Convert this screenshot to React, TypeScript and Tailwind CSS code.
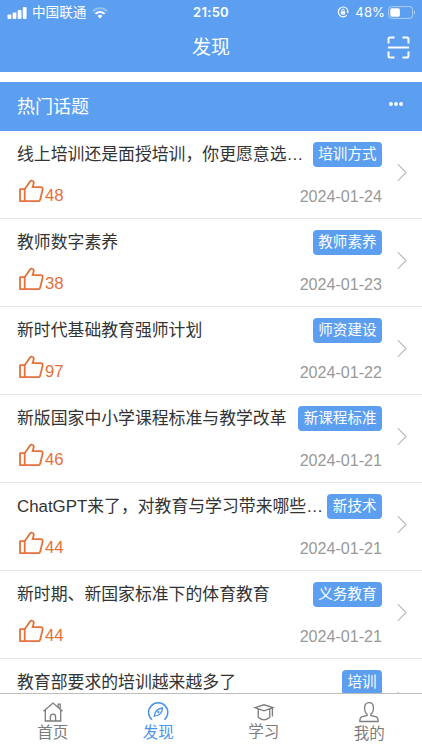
import React from 'react';

type Topic = { title: string; tag: string; likes: number; date: string };

const topics: Topic[] = [
  { title: '线上培训还是面授培训，你更愿意选…', tag: '培训方式', likes: 48, date: '2024-01-24' },
  { title: '教师数字素养', tag: '教师素养', likes: 38, date: '2024-01-23' },
  { title: '新时代基础教育强师计划', tag: '师资建设', likes: 97, date: '2024-01-22' },
  { title: '新版国家中小学课程标准与教学改革', tag: '新课程标准', likes: 46, date: '2024-01-21' },
  { title: 'ChatGPT来了，对教育与学习带来哪些…', tag: '新技术', likes: 44, date: '2024-01-21' },
  { title: '新时期、新国家标准下的体育教育', tag: '义务教育', likes: 44, date: '2024-01-21' },
  { title: '教育部要求的培训越来越多了', tag: '培训', likes: 40, date: '2024-01-21' },
];

function StatusBar() {
  return (
    <div className="grid h-6 grid-cols-[1fr_auto_1fr] items-center">
      <div className="flex items-center pl-[7px]">
        <svg width="20" height="12" viewBox="0 0 20 12" fill="white">
          <rect x="0.5" y="7.5" width="3.8" height="4.5" rx="1" />
          <rect x="5.6" y="5.5" width="3.8" height="6.5" rx="1" />
          <rect x="10.7" y="3" width="3.8" height="9" rx="1" />
          <rect x="15.8" y="0" width="3.8" height="12" rx="1" />
        </svg>
        <span className="ml-[5px] mt-px text-[13.6px] leading-6">中国联通</span>
        <svg className="ml-[6px]" width="16" height="12" viewBox="0 0 16 12" fill="none">
          <path d="M1 4.2a10 10 0 0 1 14 0" stroke="white" strokeOpacity=".35" strokeWidth="2" />
          <path d="M3.4 6.9a6.6 6.6 0 0 1 9.2 0" stroke="white" strokeWidth="2" />
          <path d="M5.5 9a3.6 3.6 0 0 1 5 0L8 11.6z" fill="white" />
        </svg>
      </div>
      <span className="mt-px font-[Inter] text-[13px] font-semibold tracking-[0.3px]">21:50</span>
      <div className="flex items-center justify-end pr-[6px]">
        <svg width="12" height="12" viewBox="0 0 12 12" fill="none" stroke="white">
          <path d="M9.8 2.6A4.9 4.9 0 1 0 9.9 9.2M9.8 2.6Q11 4 10.9 5.8" strokeWidth="1.1" />
          <path d="M9.3 5.5h2.7l-1.3 2z" fill="white" stroke="none" />
          <rect x="3.8" y="5.2" width="4.2" height="3.4" rx=".4" fill="white" stroke="none" />
          <path d="M4.7 5.4V4.4a1.2 1.2 0 0 1 2.4 0v1" strokeWidth=".9" />
        </svg>
        <span className="ml-[6px] mt-px font-[Inter] text-[13.2px]">48%</span>
        <svg className="ml-[3px]" width="28" height="13" viewBox="0 0 28 13" fill="none">
          <rect x=".6" y=".6" width="24" height="11.8" rx="3" stroke="white" strokeOpacity=".5" />
          <rect x="2.3" y="2.3" width="9.6" height="8.4" rx="1.6" fill="white" />
          <path d="M26 4.5c1.6.6 1.6 3.4 0 4z" fill="white" fillOpacity=".5" />
        </svg>
      </div>
    </div>
  );
}

function ThumbUp() {
  return (
    <svg className="mt-px" width="27" height="24" viewBox="0 0 27 24" fill="none" stroke="#e4703a" strokeWidth="1.8" strokeLinejoin="round">
      <path d="M3 11.2h4.7v12H3z" />
      <path d="M7.7 11.2 13 3.5c1-1.6 4-.9 3.8 1.4-.1 1.5-.9 2.8-1.4 4.3h8.3c1.6 0 2.3.9 1.9 2.4L23.300 21.300c-.3 1.300-1 1.900-2.200 1.900H7.700" />
    </svg>
  );
}

function TopicRow({ topic }: { topic: Topic }) {
  return (
    <li className="flex h-[88px] shrink-0 border-b border-[#e6e6e6] pl-[17px]">
      <div className="w-[365px] shrink-0">
        <div className="flex h-[47px] items-center justify-between">
          <span className="whitespace-nowrap text-[16.85px] leading-[26px] text-[#333]">{topic.title}</span>
          <span className="h-[25px] shrink-0 rounded-[4px] bg-[#5c9ff1] px-[5.5px] text-[14.55px] leading-[25px] text-white">{topic.tag}</span>
        </div>
        <div className="-mt-px flex justify-between">
          <div className="flex">
            <ThumbUp />
            <span className="ml-px mt-[7px] text-[16.8px] leading-6 text-[#e4703a]">{topic.likes}</span>
          </div>
          <span className="mt-[7px] text-[16.1px] leading-6 text-[#999]">{topic.date}</span>
        </div>
      </div>
      <svg className="ml-[15px] mt-[32px]" width="10" height="19" viewBox="0 0 10 19" fill="none" stroke="#b8b8b8" strokeWidth="1.1">
        <path d="M.8 1.2 9 9.5.8 17.8" />
      </svg>
    </li>
  );
}

const tabs = [
  {
    name: '首页',
    pad: 'pt-[7px]',
    label: 'leading-[20px]',
    icon: (
      <>
        <path d="M1.500 10.200 11 2l9.500 8.200M3.300 9v11h15.400V9M16.200 5.800V3.200h2v4.400" />
        <path d="M8.400 20v-4.200c0-3.600 5.200-3.600 5.200 0V20" />
      </>
    ),
  },
  {
    name: '发现',
    pad: 'pt-[7px]',
    label: 'leading-[20px]',
    icon: (
      <>
        <path d="M5 18.800a9.600 9.600 0 1 1 12.400 0" strokeWidth="1.5" />
        <path d="M15.600 7c-4.600.3-7.600 3-8.400 8.200 5-.4 7.900-3.200 8.400-8.200z" />
        <circle cx="11.400" cy="11.100" r=".5" />
      </>
    ),
  },
  {
    name: '学习',
    pad: 'pt-[6px]',
    label: 'leading-[20px]',
    icon: (
      <path d="M2 7.600 11 4.800l9 2.800-9 3.200zM5.200 9v8.300q2.600 2.500 5.800 2.500t5.800-2.500V9M19.400 7.800v8.700" />
    ),
  },
  {
    name: '我的',
    pad: 'pt-[8px]',
    label: 'leading-[20px]',
    icon: (
      <path d="M11 .7C8 .7 6.600 2.700 6.600 5.800c0 3 1 5.400 2.500 6.400v1.200l-5.300 1.400c-1.700.5-2 1.600-2 4.700h18.400c0-3.100-.3-4.200-2-4.700l-5.300-1.400v-1.200c1.500-1 2.500-3.400 2.500-6.400C15.400 2.700 14 .7 11 .7z" />
    ),
  },
];

function TabBar() {
  return (
    <nav className="grid h-[57px] shrink-0 grid-cols-4 border-t border-[#bdbdbd] bg-white">
      {tabs.map((tab, i) => (
        <div key={tab.name} className={`flex flex-col items-center ${tab.pad} ${i === 1 ? 'text-[#4c94e8]' : 'text-[#7c7c7c]'}`}>
          <svg className="shrink-0" width="22" height="22" viewBox="0 0 22 22" fill="none" stroke="currentColor" strokeWidth="1.3">
            {tab.icon}
          </svg>
          <span className={`text-[15.500px] ${tab.label}`}>{tab.name}</span>
        </div>
      ))}
    </nav>
  );
}

export default function App() {
  return (
    <div className="flex h-[750px] w-[422px] flex-col overflow-hidden bg-white font-['Liberation_Sans','Noto_Sans_CJK_SC',sans-serif]">
      <header className="h-[72px] shrink-0 bg-[#5c9ff1] text-white">
        <StatusBar />
        <div className="grid h-[46px] grid-cols-[1fr_auto_1fr] items-center">
          <div />
          <h1 className="mt-[2px] text-[19px]">发现</h1>
          <div className="flex justify-end pr-[12px]">
            <svg width="23" height="23" viewBox="0 0 23 23" fill="none" stroke="white" strokeWidth="2">
              <path d="M1.5 7.5V3q0-1.5 1.5-1.5h4.5M15.5 1.5H20q1.5 0 1.5 1.5v4.5M21.5 15.5V20q0 1.5-1.5 1.5h-4.5M7.5 21.5H3q-1.5 0-1.5-1.5v-4.5M1 11.5h21" />
            </svg>
          </div>
        </div>
      </header>
      <section className="mt-[10px] flex min-h-0 flex-1 flex-col overflow-hidden">
        <div className="flex h-[49px] shrink-0 items-center justify-between bg-[#5c9ff1] pl-[17px] pr-[19px] text-white">
          <h2 className="mt-[2px] text-[18px]">热门话题</h2>
          <svg className="-mt-[6px]" width="14" height="4" viewBox="0 0 14 4" fill="white">
            <circle cx="2" cy="2" r="1.9" />
            <circle cx="7" cy="2" r="1.9" />
            <circle cx="12" cy="2" r="1.9" />
          </svg>
        </div>
        <ul className="min-h-0 flex-1 overflow-hidden">
          {topics.map((topic) => (
            <TopicRow key={topic.title} topic={topic} />
          ))}
        </ul>
      </section>
      <TabBar />
    </div>
  );
}
